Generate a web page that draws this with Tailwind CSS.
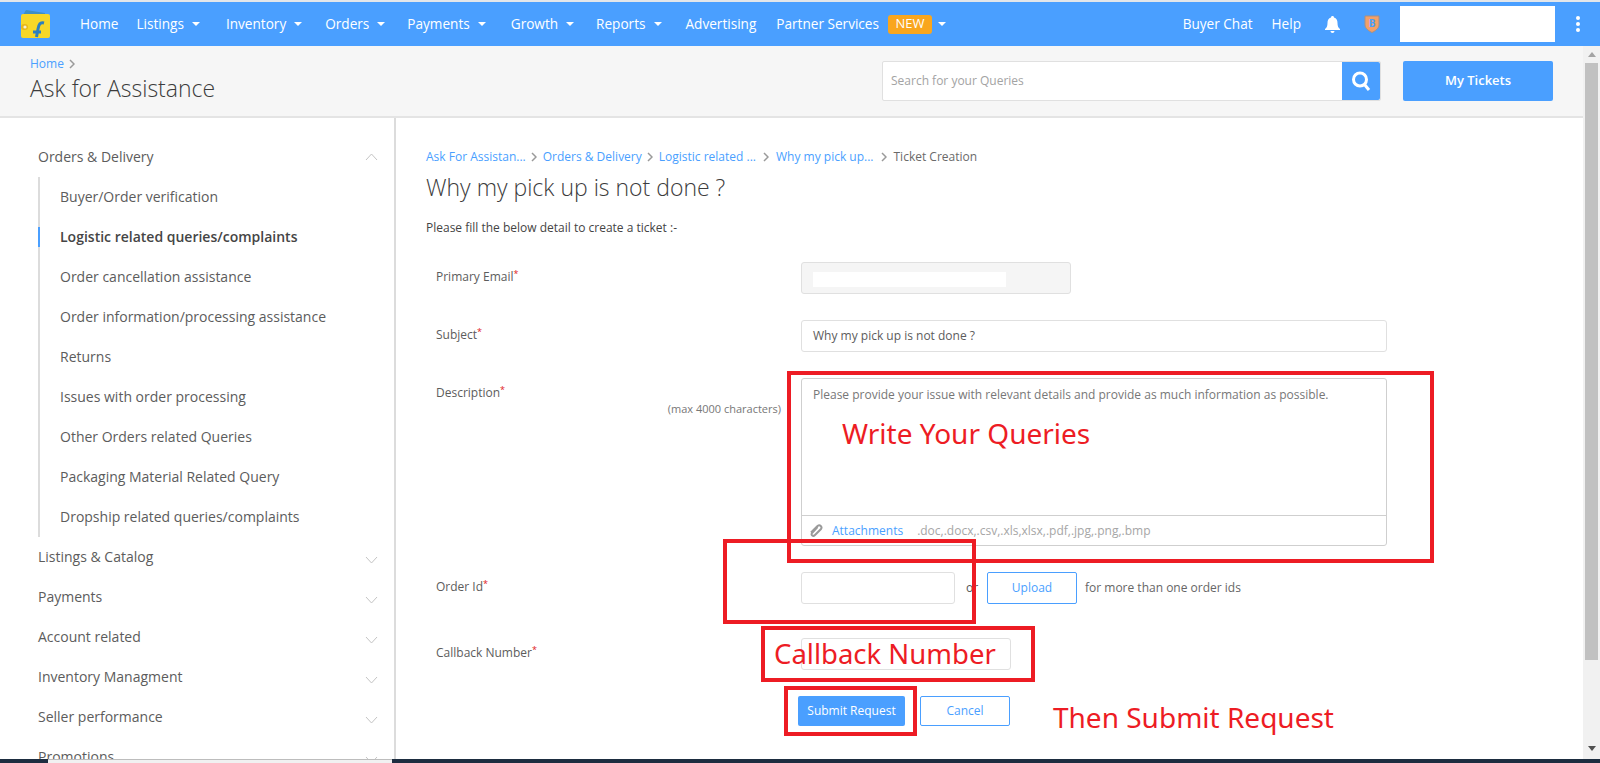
<!DOCTYPE html>
<html lang="en">
<head>
    <meta charset="UTF-8">
    <title>Ask for Assistance</title>
    <script src="https://cdn.jsdelivr.net/npm/@tailwindcss/browser@4"></script>
</head>
<body class="relative h-[763px] w-[1600px] overflow-hidden bg-white font-['Open_Sans',sans-serif] text-[#5c5c5c]">
    <!-- top nav -->
    <nav class="flex h-[46px] items-center border-t-2 border-[#e3e6ea] bg-[#4a9fff] text-[13.6px] text-white">
        <svg class="ml-[20px] h-[30px] w-[31px]" viewBox="0 0 31 30">
            <path d="M3 6 L6 1 L25 4 L25 7 Z" fill="#3f8fc4"/>
            <rect x="1" y="5" width="29" height="24" rx="2" fill="#f7d728"/>
            <rect x="1" y="15" width="7" height="6" rx="3" fill="#e8b91a"/>
            <circle cx="5" cy="18" r="1.6" fill="#f4efd0"/>
            <path d="M13 23 H21 M24 14 C20 13 19 15 18 20 L16.500 28" fill="none" stroke="#2b7fc0" stroke-width="3"/>
        </svg>
        <a class="ml-[29px]">Home</a>
        <a class="ml-[18px] flex items-center">Listings<span class="ml-[8px] h-0 w-0 border-x-[4px] border-t-[4px] border-x-transparent border-t-white"></span></a>
        <a class="ml-[26px] flex items-center">Inventory<span class="ml-[8px] h-0 w-0 border-x-[4px] border-t-[4px] border-x-transparent border-t-white"></span></a>
        <a class="ml-[23px] flex items-center">Orders<span class="ml-[8px] h-0 w-0 border-x-[4px] border-t-[4px] border-x-transparent border-t-white"></span></a>
        <a class="ml-[22px] flex items-center">Payments<span class="ml-[8px] h-0 w-0 border-x-[4px] border-t-[4px] border-x-transparent border-t-white"></span></a>
        <a class="ml-[25px] flex items-center">Growth<span class="ml-[8px] h-0 w-0 border-x-[4px] border-t-[4px] border-x-transparent border-t-white"></span></a>
        <a class="ml-[22px] flex items-center">Reports<span class="ml-[8px] h-0 w-0 border-x-[4px] border-t-[4px] border-x-transparent border-t-white"></span></a>
        <a class="ml-[24px]">Advertising</a>
        <a class="ml-[20px]">Partner Services</a>
        <span class="ml-[9px] flex h-[19px] w-[44px] items-center justify-center rounded-[3px] bg-[#f9a61e] text-[13px] font-medium">NEW</span>
        <span class="ml-[6px] h-0 w-0 border-x-[4px] border-t-[4px] border-x-transparent border-t-white"></span>
        <div class="ml-auto flex items-center">
            <a>Buyer Chat</a>
            <a class="ml-[19px]">Help</a>
            <svg class="ml-[24px] h-[17px] w-[15px]" viewBox="0 0 15 17" fill="#fff">
                <path d="M7.500 0 C8.500 0 9 .7 9 1.500 C11.500 2.200 12.500 4.300 12.500 7 C12.500 10 13.300 11.800 15 13 V14 H0 V13 C1.700 11.800 2.500 10 2.500 7 C2.500 4.300 3.500 2.200 6 1.500 C6 .7 6.500 0 7.500 0 Z"/>
                <path d="M5.500 15 H9.500 C9.500 16.200 8.600 17 7.500 17 C6.400 17 5.500 16.200 5.500 15 Z"/>
            </svg>
            <svg class="ml-[24px] h-[18px] w-[16px]" viewBox="0 0 16 18">
                <path d="M1 1 H15 V10 C15 13.500 11 16 8 17.500 C5 16 1 13.500 1 10 Z" fill="#f2a06a" stroke="#a98f80" stroke-width="1"/>
                <text x="8" y="12" text-anchor="middle" font-size="10" font-weight="700" fill="#4a9fff" font-family="Open Sans">B</text>
            </svg>
            <div class="ml-[20px] h-[36px] w-[155px] bg-white"></div>
            <div class="ml-[21px] mr-[20px] flex flex-col gap-[2px]">
                <span class="h-[4px] w-[4px] rounded-full bg-white"></span>
                <span class="h-[4px] w-[4px] rounded-full bg-white"></span>
                <span class="h-[4px] w-[4px] rounded-full bg-white"></span>
            </div>
        </div>
    </nav>

    <div class="flex h-[713px]">
        <div class="flex w-[1583px] flex-col">
            <!-- page header -->
            <header class="flex h-[72px] shrink-0 border-b-2 border-[#e4e4e4] bg-[#f6f6f6] pl-[30px] pr-[30px]">
                <div class="pt-[10px]">
                    <div class="flex h-[16px] items-center text-[12px] text-[#4a9fff]">Home
                        <svg class="ml-[5px] h-[10px] w-[6px]" viewBox="0 0 6 10" fill="none" stroke="#9a9a9a" stroke-width="1.500"><path d="M1 1 L5 5 L1 9"/></svg>
                    </div>
                    <h1 class="mt-[1px] text-[23px] leading-[30px] font-light text-[#3c3c3c]">Ask for Assistance</h1>
                </div>
                <div class="ml-auto mt-[15px] flex h-[40px] w-[499px] rounded-[2px] border border-[#e0e0e0] bg-white">
                    <span class="flex-1 pl-[8px] text-[12px] leading-[38px] text-[#a3a3a3]">Search for your Queries</span>
                    <span class="flex w-[38px] items-center justify-center rounded-r-[2px] bg-[#4a9fff]">
                        <svg class="h-[22px] w-[20px]" viewBox="0 0 20 22" fill="none" stroke="#fff" stroke-width="3"><circle cx="9" cy="9.500" r="6.500"/><path d="M13.500 14.500 L18 20"/></svg>
                    </span>
                </div>
                <button class="ml-[22px] mt-[15px] h-[40px] w-[150px] rounded-[2px] bg-[#4a9fff] text-[13px] font-semibold text-white">My Tickets</button>
            </header>

            <div class="flex min-h-0 flex-1">
                <!-- sidebar -->
                <aside class="w-[396px] shrink-0 overflow-hidden border-r-2 border-[#dcdcdc] pl-[38px] pr-[16px] pt-[19px] text-[14px] leading-[40px]">
                    <div class="flex items-center justify-between">Orders &amp; Delivery
                        <svg class="h-[8px] w-[13px]" viewBox="0 0 13 8" fill="none" stroke="#c4c4c4"><path d="M1 7 L6.500 1 L12 7"/></svg>
                    </div>
                    <ul class="border-l-2 border-[#dcdcdc] pl-[20px]">
                        <li>Buyer/Order verification</li>
                        <li class="relative font-semibold text-[#454545]"><span class="absolute -left-[22px] top-[10px] h-[20px] w-[2px] bg-[#4a9fff]"></span>Logistic related queries/complaints</li>
                        <li>Order cancellation assistance</li>
                        <li>Order information/processing assistance</li>
                        <li>Returns</li>
                        <li>Issues with order processing</li>
                        <li>Other Orders related Queries</li>
                        <li>Packaging Material Related Query</li>
                        <li>Dropship related queries/complaints</li>
                    </ul>
                    <div class="flex items-center justify-between">Listings &amp; Catalog<svg class="mt-[6px] h-[8px] w-[13px]" viewBox="0 0 13 8" fill="none" stroke="#c4c4c4"><path d="M1 1 L6.500 7 L12 1"/></svg></div>
                    <div class="flex items-center justify-between">Payments<svg class="mt-[6px] h-[8px] w-[13px]" viewBox="0 0 13 8" fill="none" stroke="#c4c4c4"><path d="M1 1 L6.500 7 L12 1"/></svg></div>
                    <div class="flex items-center justify-between">Account related<svg class="mt-[6px] h-[8px] w-[13px]" viewBox="0 0 13 8" fill="none" stroke="#c4c4c4"><path d="M1 1 L6.500 7 L12 1"/></svg></div>
                    <div class="flex items-center justify-between">Inventory Managment<svg class="mt-[6px] h-[8px] w-[13px]" viewBox="0 0 13 8" fill="none" stroke="#c4c4c4"><path d="M1 1 L6.500 7 L12 1"/></svg></div>
                    <div class="flex items-center justify-between">Seller performance<svg class="mt-[6px] h-[8px] w-[13px]" viewBox="0 0 13 8" fill="none" stroke="#c4c4c4"><path d="M1 1 L6.500 7 L12 1"/></svg></div>
                    <div class="flex items-center justify-between">Promotions<svg class="mt-[6px] h-[8px] w-[13px]" viewBox="0 0 13 8" fill="none" stroke="#c4c4c4"><path d="M1 1 L6.500 7 L12 1"/></svg></div>
                </aside>

                <!-- ticket form -->
                <main class="flex-1 pl-[30px] pt-[31px] text-[12px]">
                    <div class="flex h-[16px] items-center text-[#4a9fff]">
                        <a>Ask For Assistan...</a>
                        <svg class="ml-[5px] mr-[6px] h-[10px] w-[6px]" viewBox="0 0 6 10" fill="none" stroke="#9a9a9a" stroke-width="1.500"><path d="M1 1 L5 5 L1 9"/></svg>
                        <a>Orders &amp; Delivery</a>
                        <svg class="ml-[5px] mr-[6px] h-[10px] w-[6px]" viewBox="0 0 6 10" fill="none" stroke="#9a9a9a" stroke-width="1.500"><path d="M1 1 L5 5 L1 9"/></svg>
                        <a>Logistic related ...</a>
                        <svg class="mx-[7px] h-[10px] w-[6px]" viewBox="0 0 6 10" fill="none" stroke="#9a9a9a" stroke-width="1.500"><path d="M1 1 L5 5 L1 9"/></svg>
                        <a>Why my pick up...</a>
                        <svg class="mx-[7px] h-[10px] w-[6px]" viewBox="0 0 6 10" fill="none" stroke="#9a9a9a" stroke-width="1.500"><path d="M1 1 L5 5 L1 9"/></svg>
                        <span class="text-[#6a6a6a]">Ticket Creation</span>
                    </div>
                    <h2 class="mt-[7px] text-[23px] leading-[30px] font-light text-[#3c3c3c]">Why my pick up is not done ?</h2>
                    <p class="mt-[18px] h-[16px] leading-[16px] text-[#444]">Please fill the below detail to create a ticket :-</p>

                    <div class="mt-[26px] flex h-[32px]">
                        <label class="w-[375px] pl-[10px] pt-[7px] leading-[16px]">Primary Email<sup class="text-[#e02020]">*</sup></label>
                        <div class="h-[32px] w-[270px] rounded-[3px] border border-[#e0e0e0] bg-[#f5f5f5] pl-[11px] pt-[9px]"><div class="h-[15px] w-[193px] bg-white"></div></div>
                    </div>
                    <div class="mt-[26px] flex h-[32px]">
                        <label class="w-[375px] pl-[10px] pt-[7px] leading-[16px]">Subject<sup class="text-[#e02020]">*</sup></label>
                        <div class="h-[32px] w-[586px] rounded-[3px] border border-[#e0e0e0] pl-[11px] leading-[30px]">Why my pick up is not done ?</div>
                    </div>
                    <div class="mt-[26px] flex h-[168px]">
                        <div class="relative w-[375px] pl-[10px] pt-[7px] leading-[16px]">
                            <label>Description<sup class="text-[#e02020]">*</sup></label>
                            <div class="absolute right-[20px] top-[23px] text-[11px] leading-[16px] text-[#777]">(max 4000 characters)</div>
                        </div>
                        <div class="flex h-[168px] w-[586px] flex-col rounded-[3px] border border-[#cfcfcf]">
                            <div class="flex-1 pl-[11px] pt-[8px] leading-[16px] text-[#777]">Please provide your issue with relevant details and provide as much information as possible.</div>
                            <div class="flex h-[30px] items-center border-t border-[#cfcfcf] pl-[8px]">
                                <svg class="-ml-[2px] h-[14px] w-[15px]" viewBox="0 0 15 14" fill="none" stroke="#9a9a9a" stroke-width="2"><path d="M9.500 3 L4 9 C2.500 11 5 13 7 11 L13 5 C14.500 3 12 0 9.500 2 L3 8.500"/></svg>
                                <a class="ml-[9px] text-[#4a9fff]">Attachments</a>
                                <span class="ml-[14px] text-[#a6a6a6]">.doc,.docx,.csv,.xls,xlsx,.pdf,.jpg,.png,.bmp</span>
                            </div>
                        </div>
                    </div>
                    <div class="mt-[26px] flex h-[32px] items-center">
                        <label class="w-[375px] self-start pl-[10px] pt-[7px] leading-[16px]">Order Id<sup class="text-[#e02020]">*</sup></label>
                        <div class="h-[32px] w-[154px] rounded-[3px] border border-[#e0e0e0]"></div>
                        <span class="ml-[11px] w-[21px] text-[#555]">or</span>
                        <button class="h-[32px] w-[90px] rounded-[2px] border border-[#4a9fff] text-[#4a9fff]">Upload</button>
                        <span class="ml-[8px] text-[#666]">for more than one order ids</span>
                    </div>
                    <div class="mt-[34px] flex h-[32px]">
                        <label class="w-[375px] pl-[10px] pt-[7px] leading-[16px]">Callback Number<sup class="text-[#e02020]">*</sup></label>
                        <div class="h-[32px] w-[210px] rounded-[3px] border border-[#e0e0e0]"></div>
                    </div>
                    <div class="ml-[372px] mt-[26px] flex h-[30px] gap-[15px]">
                        <button class="h-[30px] w-[107px] rounded-[2px] bg-[#4a9fff] text-white">Submit Request</button>
                        <button class="h-[30px] w-[90px] rounded-[2px] border border-[#4a9fff] text-[#4a9fff]">Cancel</button>
                    </div>
                </main>
            </div>
        </div>

        <!-- scrollbar -->
        <div class="flex w-[17px] shrink-0 flex-col items-center bg-[#f1f1f1]">
            <span class="mt-[6px] h-0 w-0 border-x-[4px] border-b-[5px] border-x-transparent border-b-[#a3a3a3]"></span>
            <span class="mt-[6px] h-[597px] w-[13px] bg-[#c1c1c1]"></span>
            <span class="mt-[86px] h-0 w-0 border-x-[4px] border-t-[5px] border-x-transparent border-t-[#505050]"></span>
        </div>
    </div>

    <!-- window strip at the bottom -->
    <div class="absolute bottom-0 left-0 flex h-[4px] w-full bg-[#1d2d40]">
        <div class="ml-[48px] h-full w-[344px] border-t border-[#bdbdbd] bg-[#f1f1f1]"></div>
    </div>

    <!-- red annotations drawn on top of the screenshot -->
    <div class="absolute left-[787px] top-[371px] h-[192px] w-[647px] border-[4px] border-[#ed1c24]"></div>
    <div class="absolute left-[723px] top-[539px] h-[85px] w-[253px] border-[4px] border-[#ed1c24]"></div>
    <div class="absolute left-[761px] top-[626px] h-[56px] w-[274px] border-[4px] border-[#ed1c24]"></div>
    <div class="absolute left-[784px] top-[686px] h-[50px] w-[133px] border-[4px] border-[#ed1c24]"></div>
    <div class="absolute left-[842px] top-[413px] font-['Noto_Sans',sans-serif] text-[28px] leading-[40px] text-[#ed1c24]">Write Your Queries</div>
    <div class="absolute left-[774px] top-[634px] font-['Noto_Sans',sans-serif] text-[27.500px] leading-[40px] text-[#ed1c24]">Callback Number</div>
    <div class="absolute left-[1053px] top-[697px] font-['Noto_Sans',sans-serif] text-[28px] leading-[40px] text-[#ed1c24]">Then Submit Request</div>
</body>
</html>
